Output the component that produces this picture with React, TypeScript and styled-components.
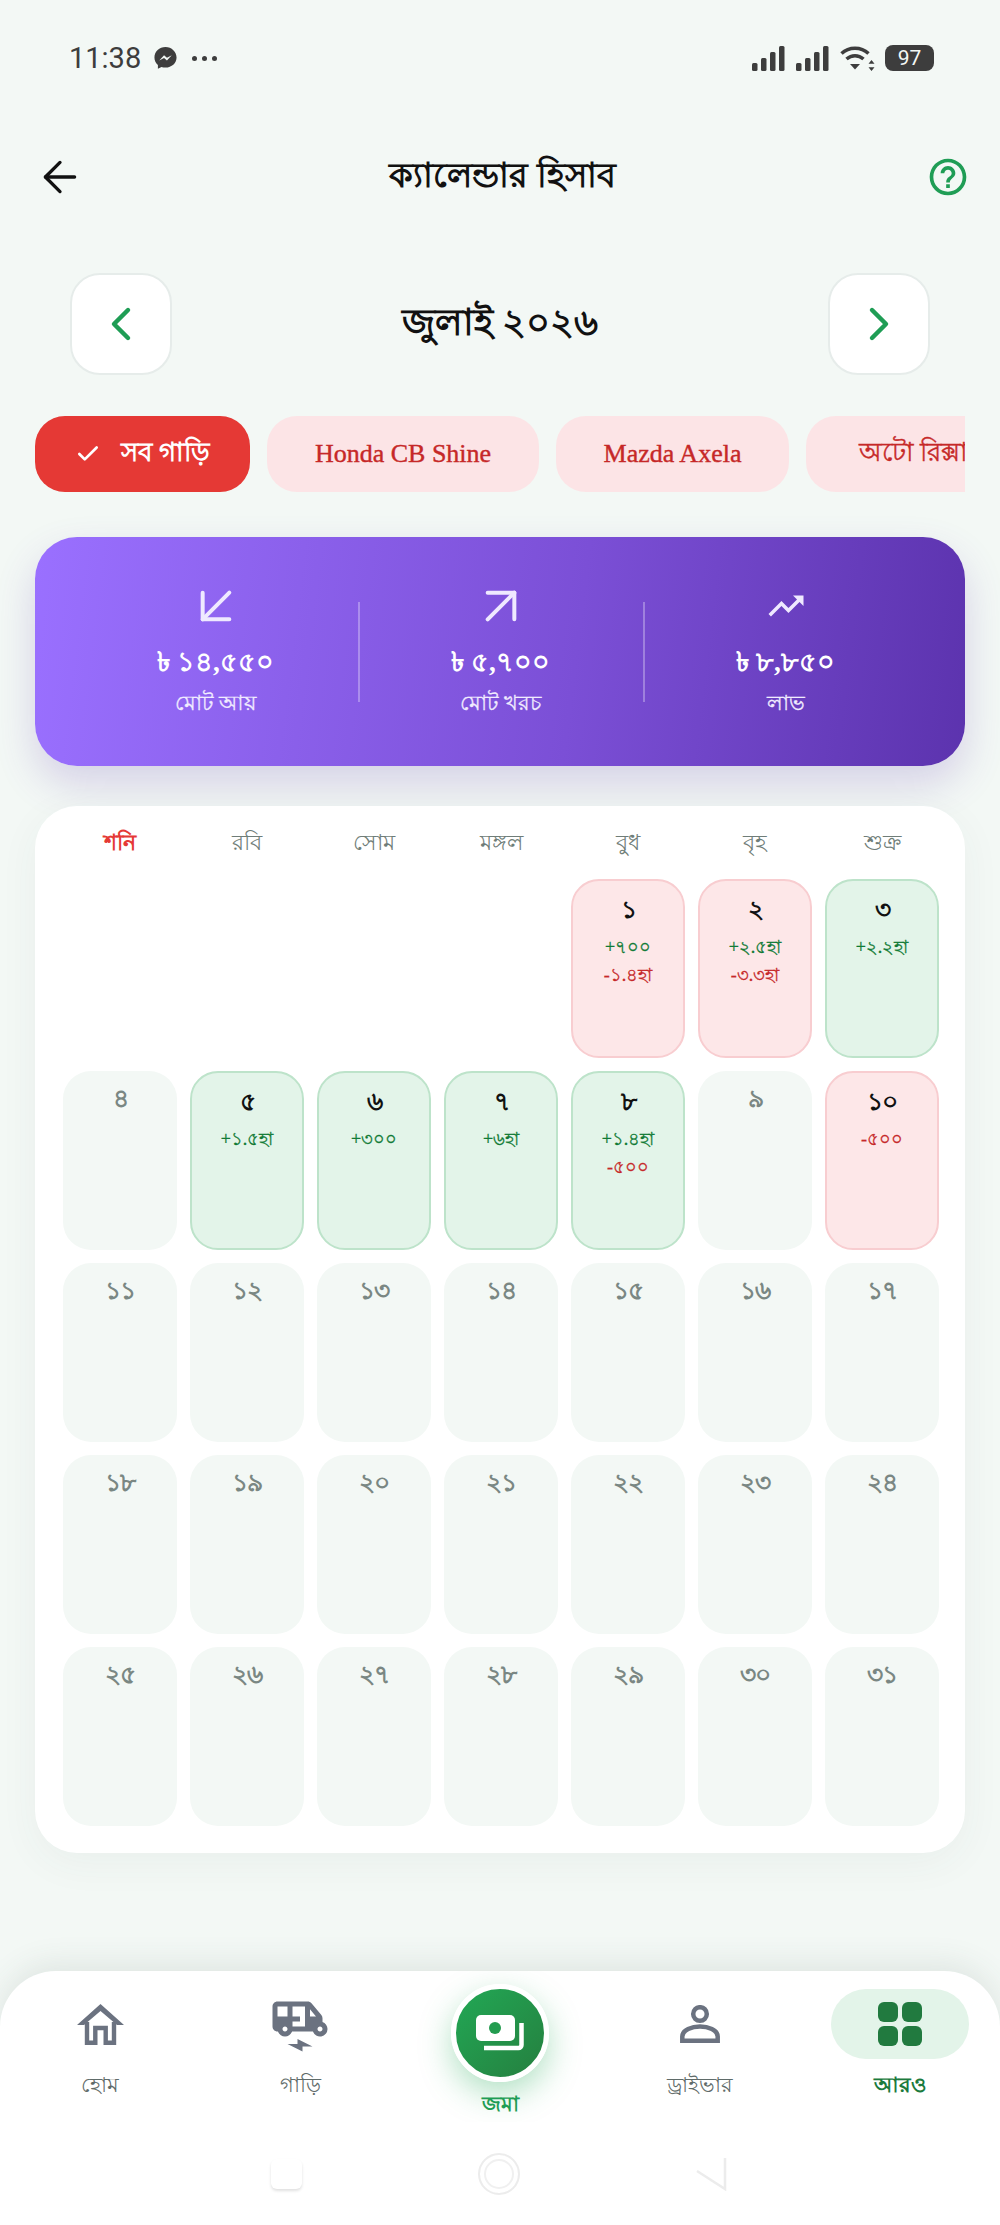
import React from "react";
import styled, { createGlobalStyle } from "styled-components";
import { ArrowDownLeft, ArrowUpRight, ArrowLeft, Check, ChevronLeft, ChevronRight } from "lucide-react";
import { MdElectricRickshaw, MdHelpOutline, MdTrendingUp } from "react-icons/md";

const GlobalStyle = createGlobalStyle`
  html, body {
    margin: 0;
    padding: 0;
    background: #f3f8f5;
  }
  body {
    font-family: "Liberation Serif", "Noto Sans", serif;
  }
`;

type Entry = { day: string; tone?: "green" | "red"; plus?: string; minus?: string };

const weekDays = ["শনি", "রবি", "সোম", "মঙ্গল", "বুধ", "বৃহ", "শুক্র"];

const days: Entry[] = [
  { day: "১", tone: "red", plus: "+৭০০", minus: "-১.৪হা" },
  { day: "২", tone: "red", plus: "+২.৫হা", minus: "-৩.৩হা" },
  { day: "৩", tone: "green", plus: "+২.২হা" },
  { day: "৪" },
  { day: "৫", tone: "green", plus: "+১.৫হা" },
  { day: "৬", tone: "green", plus: "+৩০০" },
  { day: "৭", tone: "green", plus: "+৬হা" },
  { day: "৮", tone: "green", plus: "+১.৪হা", minus: "-৫০০" },
  { day: "৯" },
  { day: "১০", tone: "red", minus: "-৫০০" },
  ...["১১", "১২", "১৩", "১৪", "১৫", "১৬", "১৭", "১৮", "১৯", "২০", "২১", "২২", "২৩", "২৪", "২৫", "২৬", "২৭", "২৮", "২৯", "৩০", "৩১"].map(
    (day) => ({ day })
  ),
];

const App = () => {
  return (
    <Page>
      <GlobalStyle />
      <StatusBar>
        <StatusLeft>
          <Clock>11:38</Clock>
          <svg width="25" height="26" viewBox="0 0 26 26">
            <path
              d="M13 1.500C6.600 1.500 1.500 6.200 1.500 12.400c0 3.200 1.400 6 3.600 7.900v4l3.700-2c1.300.4 2.700.6 4.200.6 6.400 0 11.500-4.700 11.500-10.500S19.400 1.500 13 1.500z"
              fill="#3d3d3d"
            />
            <path d="M6.500 15.500l5-5.300 3 2.600 5-2.600-5 5.300-3-2.600z" fill="#f3f8f5" />
          </svg>
          <Dots>
            <i />
            <i />
            <i />
          </Dots>
        </StatusLeft>
        <StatusRight>
          <SignalIcon />
          <SignalIcon />
          <svg width="36" height="26" viewBox="0 0 36 26" fill="none">
            <path d="M1.500 8.500C9 1.500 21 1.500 28.500 8.500" stroke="#3d3d3d" strokeWidth="3.500" />
            <path d="M6.500 14c5-4.500 12-4.500 17 0" stroke="#3d3d3d" strokeWidth="3.500" />
            <path d="M10 19h10l-5 5.500z" fill="#3d3d3d" />
            <path d="M31.500 15l3 3.700h-6zM31.500 26l3-3.700h-6z" fill="#3d3d3d" />
          </svg>
          <Battery>97</Battery>
        </StatusRight>
      </StatusBar>

      <Header>
        <ArrowLeft size={50} color="#111" strokeWidth={1.6} />
        <Title>ক্যালেন্ডার হিসাব</Title>
        <HelpSlot>
          <MdHelpOutline size={44} color="#1f9d55" />
        </HelpSlot>
      </Header>

      <MonthRow>
        <MonthButton>
          <ChevronLeft size={56} color="#1f9d55" strokeWidth={1.9} />
        </MonthButton>
        <MonthLabel>জুলাই ২০২৬</MonthLabel>
        <MonthButton>
          <ChevronRight size={56} color="#1f9d55" strokeWidth={1.9} />
        </MonthButton>
      </MonthRow>

      <ChipRow>
        <Chip $active $width={215}>
          <Check size={26} color="#fff" strokeWidth={2.5} />
          <span>সব গাড়ি</span>
        </Chip>
        <Chip $width={272}>Honda CB Shine</Chip>
        <Chip $width={233}>Mazda Axela</Chip>
        <Chip $width={230}>অটো রিক্সা -</Chip>
      </ChipRow>

      <SummaryCard>
        <SummaryItem>
          <SummaryIcon>
            <ArrowDownLeft size={64} color="#efe9ff" strokeWidth={1.5} />
          </SummaryIcon>
          <Amount>৳ ১৪,৫৫০</Amount>
          <AmountLabel>মোট আয়</AmountLabel>
        </SummaryItem>
        <SummaryItem $divided>
          <SummaryIcon>
            <ArrowUpRight size={64} color="#efe9ff" strokeWidth={1.5} />
          </SummaryIcon>
          <Amount>৳ ৫,৭০০</Amount>
          <AmountLabel>মোট খরচ</AmountLabel>
        </SummaryItem>
        <SummaryItem $divided>
          <SummaryIcon>
            <MdTrendingUp size={42} color="#efe9ff" />
          </SummaryIcon>
          <Amount>৳ ৮,৮৫০</Amount>
          <AmountLabel>লাভ</AmountLabel>
        </SummaryItem>
      </SummaryCard>

      <CalendarCard>
        <WeekRow>
          {weekDays.map((d, i) => (
            <WeekDay key={d} $weekend={i === 0}>
              {d}
            </WeekDay>
          ))}
        </WeekRow>
        <DayGrid>
          <Spacer />
          {days.map((d) => (
            <DayCell key={d.day} $tone={d.tone}>
              <DayNumber $active={!!d.tone}>{d.day}</DayNumber>
              {d.plus && <Delta $tone="green">{d.plus}</Delta>}
              {d.minus && <Delta $tone="red">{d.minus}</Delta>}
            </DayCell>
          ))}
        </DayGrid>
      </CalendarCard>

      <BottomNav>
        <NavTabs>
          <NavItem>
            <IconSlot>
              <svg width="48" height="41" viewBox="0 0 48 41" fill="none">
                <path d="M24.500 0L48 21h-7L24.500 7 8 21H1z" fill="#6b7280" />
                <path d="M11 18v20.800h8.300V24h10.400v14.800H38V18" stroke="#6b7280" strokeWidth="4.400" />
              </svg>
            </IconSlot>
            <NavLabel>হোম</NavLabel>
          </NavItem>
          <NavItem>
            <IconSlot>
              <MdElectricRickshaw size={60} color="#6b7280" />
            </IconSlot>
            <NavLabel>গাড়ি</NavLabel>
          </NavItem>
          <CenterItem>
            <CenterButton>
              <svg width="48" height="36" viewBox="0 0 48 36" fill="none">
                <rect x="0" y="0" width="39" height="26" rx="5" fill="#fff" />
                <circle cx="19" cy="13" r="6" fill="#239c4f" />
                <path d="M45.500 8v22a3 3 0 0 1-3 3H8" stroke="#fff" strokeWidth="4.500" />
              </svg>
            </CenterButton>
            <NavLabel $color="#1f9d55">জমা</NavLabel>
          </CenterItem>
          <NavItem>
            <IconSlot>
              <svg width="40" height="38" viewBox="0 0 40 38" fill="none" stroke="#6b7280" strokeWidth="4.500">
                <circle cx="20" cy="9" r="6.800" />
                <path d="M2.300 35.700V31.500C2.300 25 12 21.500 20 21.500S37.700 25 37.700 31.500v4.200z" />
              </svg>
            </IconSlot>
            <NavLabel>ড্রাইভার</NavLabel>
          </NavItem>
          <NavItem>
            <ActivePill>
              <svg width="44" height="44" viewBox="0 0 44 44" fill="#217a3f">
                <rect x="0" y="0" width="20" height="20" rx="6" />
                <rect x="24" y="0" width="20" height="20" rx="6" />
                <rect x="0" y="24" width="20" height="20" rx="6" />
                <rect x="24" y="24" width="20" height="20" rx="6" />
              </svg>
            </ActivePill>
            <NavLabel $color="#1b7a3d">আরও</NavLabel>
          </NavItem>
        </NavTabs>
        <SystemBar>
          <SystemSquare />
          <SystemCircle />
          <svg width="32" height="34" viewBox="0 0 32 34" fill="none">
            <path d="M30 1v31L2 14" stroke="#ececec" strokeWidth="2.500" />
          </svg>
        </SystemBar>
      </BottomNav>
    </Page>
  );
};

const SignalIcon = () => (
  <svg width="33" height="25" viewBox="0 0 33 25" fill="#3d3d3d">
    <rect x="0" y="17" width="5.500" height="8" rx="1.500" />
    <rect x="9" y="12" width="5.500" height="13" rx="1.500" />
    <rect x="18" y="6" width="5.500" height="19" rx="1.500" />
    <rect x="27" y="0" width="5.500" height="25" rx="1.500" />
  </svg>
);

export default App;

const Page = styled.div`
  width: 1000px;
  height: 2225px;
  position: relative;
  overflow: hidden;
  background: #f3f8f5;
  display: flex;
  flex-direction: column;
`;

const StatusBar = styled.div`
  height: 44px;
  margin-top: 36px;
  padding: 0 66px 0 69px;
  display: flex;
  align-items: center;
  justify-content: space-between;
`;

const StatusLeft = styled.div`
  display: flex;
  align-items: center;
  gap: 12px;
`;

const Clock = styled.span`
  font-family: "Roboto", sans-serif;
  font-size: 29px;
  color: #3d3d3d;
`;

const Dots = styled.div`
  display: flex;
  gap: 5px;
  margin-left: 2px;
  i {
    width: 5px;
    height: 5px;
    border-radius: 50%;
    background: #3d3d3d;
  }
`;

const StatusRight = styled.div`
  display: flex;
  align-items: center;
  gap: 11px;
`;

const Battery = styled.span`
  width: 49px;
  height: 26px;
  margin-left: -2px;
  border-radius: 8px;
  background: #3d3d3d;
  color: #f3f8f5;
  font-family: "Roboto", sans-serif;
  font-size: 21px;
  display: flex;
  align-items: center;
  justify-content: center;
`;

const Header = styled.div`
  margin-top: 52px;
  height: 90px;
  padding: 0 30px 0 35px;
  display: grid;
  grid-template-columns: 1fr auto 1fr;
  align-items: center;
`;

const Title = styled.h1`
  margin: 0;
  font-size: 34px;
  font-weight: 700;
  color: #111;
`;

const HelpSlot = styled.div`
  display: flex;
  justify-content: flex-end;
`;

const MonthRow = styled.div`
  margin-top: 51px;
  padding: 0 70px;
  display: flex;
  align-items: center;
  justify-content: space-between;
`;

const MonthButton = styled.div`
  width: 102px;
  height: 102px;
  box-sizing: border-box;
  border-radius: 30px;
  background: #fff;
  border: 2px solid #e6ecea;
  display: flex;
  align-items: center;
  justify-content: center;
`;

const MonthLabel = styled.div`
  font-size: 37px;
  font-weight: 700;
  color: #111;
`;

const ChipRow = styled.div`
  margin: 41px 35px 0;
  display: flex;
  gap: 17px;
  overflow: hidden;
`;

const Chip = styled.div<{ $active?: boolean; $width: number }>`
  flex: 0 0 ${(p) => p.$width}px;
  height: 76px;
  border-radius: 30px;
  display: flex;
  align-items: center;
  justify-content: center;
  gap: 20px;
  font-size: 26px;
  font-weight: ${(p) => (p.$active ? 700 : 400)};
  -webkit-text-stroke: ${(p) => (p.$active ? 0 : 0.4)}px;
  white-space: nowrap;
  background: ${(p) => (p.$active ? "#e53935" : "#fce4e6")};
  color: ${(p) => (p.$active ? "#fff" : "#c62828")};
`;

const SummaryCard = styled.div`
  margin: 45px 35px 0;
  height: 229px;
  box-sizing: border-box;
  border-radius: 42px;
  background: linear-gradient(97deg, #9a70ff 0%, #7b4fd6 58%, #5c33ae 100%);
  box-shadow: 0 18px 40px rgba(94, 53, 177, 0.2);
  display: grid;
  grid-template-columns: repeat(3, 285px);
  padding: 54px 37px 0 38px;
`;

const SummaryItem = styled.div<{ $divided?: boolean }>`
  display: flex;
  flex-direction: column;
  align-items: center;
  position: relative;
  &::before {
    content: "";
    display: ${(p) => (p.$divided ? "block" : "none")};
    position: absolute;
    left: 0;
    top: 11px;
    width: 1.5px;
    height: 100px;
    background: rgba(255, 255, 255, 0.3);
  }
`;

const SummaryIcon = styled.div`
  height: 30px;
  display: flex;
  align-items: center;
  justify-content: center;
  svg {
    flex-shrink: 0;
  }
`;

const Amount = styled.div`
  margin-top: 21px;
  font-size: 27px;
  line-height: 40px;
  font-weight: 700;
  color: #fff;
`;

const AmountLabel = styled.div`
  margin-top: 3px;
  font-size: 21px;
  line-height: 36px;
  color: #f1ecff;
  -webkit-text-stroke: 0.3px;
`;

const CalendarCard = styled.div`
  margin: 40px 35px 0;
  padding: 18px 27px 27px 28px;
  border-radius: 42px;
  background: #fff;
  box-shadow: 0 10px 40px rgba(60, 80, 70, 0.05);
`;

const WeekRow = styled.div`
  display: grid;
  grid-template-columns: repeat(7, 114px);
  column-gap: 13px;
  height: 55px;
  align-items: start;
`;

const WeekDay = styled.div<{ $weekend?: boolean }>`
  text-align: center;
  font-size: 22px;
  line-height: 38px;
  font-weight: ${(p) => (p.$weekend ? 700 : 400)};
  color: ${(p) => (p.$weekend ? "#e53935" : "#6f7d78")};
`;

const DayGrid = styled.div`
  display: grid;
  grid-template-columns: repeat(7, 114px);
  grid-auto-rows: 179px;
  gap: 13px;
`;

const Spacer = styled.div`
  grid-column: span 4;
`;

const DayCell = styled.div<{ $tone?: "green" | "red" }>`
  box-sizing: border-box;
  border-radius: 28px;
  padding-top: 8px;
  text-align: center;
  background: ${(p) =>
    p.$tone === "green" ? "#e3f4e9" : p.$tone === "red" ? "#fde7e8" : "#f3f8f5"};
  border: 2px solid
    ${(p) =>
      p.$tone === "green" ? "#bde3ca" : p.$tone === "red" ? "#f8cdd0" : "transparent"};
`;

const DayNumber = styled.div<{ $active: boolean }>`
  font-size: 25px;
  line-height: 36px;
  letter-spacing: -1px;
  font-weight: 700;
  color: ${(p) => (p.$active ? "#111" : "#7a8783")};
  margin-top: ${(p) => (p.$active ? 3 : 0)}px;
  margin-bottom: 5px;
`;

const Delta = styled.div<{ $tone: "green" | "red" }>`
  font-size: 18px;
  line-height: 28px;
  -webkit-text-stroke: 0.3px;
  color: ${(p) => (p.$tone === "green" ? "#107a35" : "#c62828")};
`;

const BottomNav = styled.div`
  position: absolute;
  left: 0;
  right: 0;
  bottom: 0;
  height: 254px;
  background: #fff;
  border-radius: 56px 56px 0 0;
  box-shadow: 0 -8px 30px rgba(60, 80, 70, 0.1);
  display: flex;
  flex-direction: column;
`;

const NavTabs = styled.div`
  display: grid;
  grid-template-columns: repeat(5, 1fr);
  height: 151px;
  padding-top: 18px;
  box-sizing: border-box;
  overflow: hidden;
`;

const NavItem = styled.div`
  display: flex;
  flex-direction: column;
  align-items: center;
`;

const IconSlot = styled.div`
  height: 70px;
  display: flex;
  align-items: center;
  justify-content: center;
`;

const NavLabel = styled.div<{ $color?: string }>`
  margin-top: 8px;
  font-size: 21px;
  line-height: 36px;
  font-weight: ${(p) => (p.$color ? 700 : 400)};
  color: ${(p) => p.$color ?? "#5f6b69"};
`;

const CenterItem = styled.div`
  display: flex;
  flex-direction: column;
  align-items: center;
  margin-top: -5px;
  ${NavLabel} {
    margin-top: 4px;
  }
`;

const CenterButton = styled.div`
  width: 98px;
  height: 98px;
  box-sizing: border-box;
  border: 5px solid #fff;
  border-radius: 50%;
  background: linear-gradient(135deg, #22a855, #257f3f);
  box-shadow: 0 12px 32px rgba(34, 168, 85, 0.35);
  display: flex;
  align-items: center;
  justify-content: center;
`;

const ActivePill = styled.div`
  width: 138px;
  height: 70px;
  border-radius: 35px;
  background: #e3f4e9;
  display: flex;
  align-items: center;
  justify-content: center;
`;

const SystemBar = styled.div`
  flex: 1;
  padding: 0 273px 0 271px;
  display: flex;
  align-items: center;
  justify-content: space-between;
`;

const SystemSquare = styled.div`
  width: 31px;
  height: 30px;
  border-radius: 6px;
  background: #fff;
  box-shadow: 0 2px 3px rgba(0, 0, 0, 0.12);
`;

const SystemCircle = styled.div`
  width: 42px;
  height: 42px;
  box-sizing: border-box;
  border-radius: 50%;
  border: 2.5px solid #ececec;
  box-shadow: inset 0 0 0 4px #fff, inset 0 0 0 6px #f0f0f0;
`;
